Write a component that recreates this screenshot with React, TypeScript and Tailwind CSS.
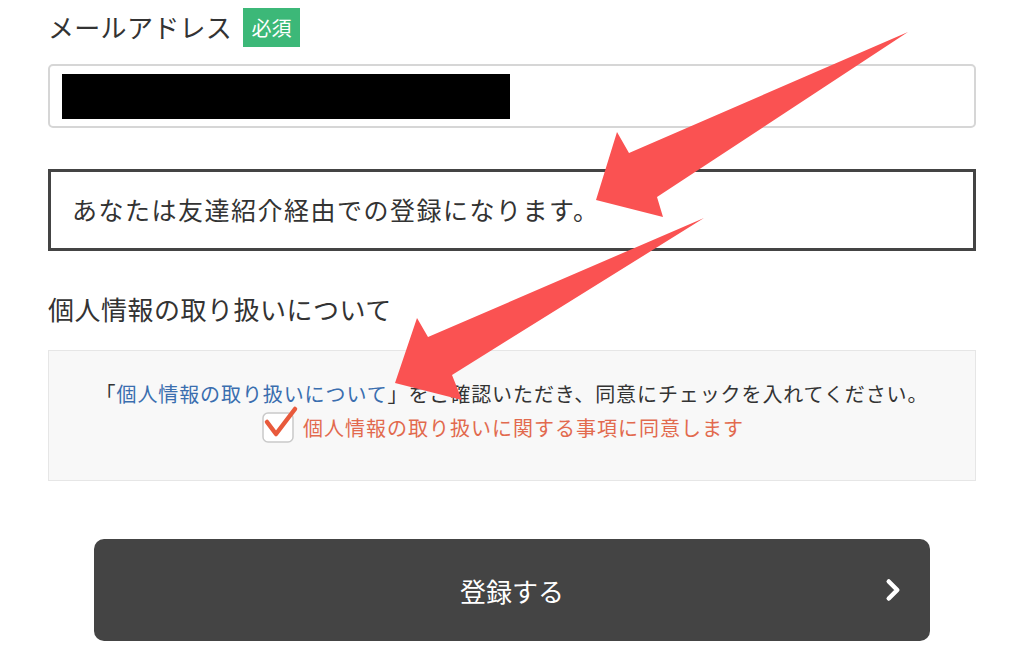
import { ChevronRight } from "lucide-react";

const jp = { fontFamily: '"Noto Sans CJK JP", "Noto Sans", sans-serif' };

const Arrows = () => (
  <svg
    className="pointer-events-none absolute left-0 top-0"
    width="1024"
    height="655"
    viewBox="0 0 1024 655"
  >
    {/* upper arrow, pointing at the referral notice */}
    <polygon
      points="908,32 657,197 663,217 596,200 617,132 629,153"
      fill="#fa5252"
    />
    {/* lower arrow, pointing at the policy link */}
    <polygon
      points="704,218 452,375 462,400 395,383 417,318 428,337"
      fill="#fa5252"
    />
  </svg>
);

const CheckBox = () => (
  <svg width="40" height="36" viewBox="0 0 40 36" className="shrink-0 -mt-[6px] overflow-visible">
    <rect x="1" y="6" width="30" height="29" rx="5" fill="#ffffff" stroke="#c9c9c9" strokeWidth="1.5" />
    <path d="M5 15 L14 27 L33 2" fill="none" stroke="#e85a3c" strokeWidth="4.5" strokeLinecap="round" strokeLinejoin="round" />
  </svg>
);

export default function App() {
  return (
    <div className="relative h-[655px] w-[1024px] overflow-hidden bg-white text-[#333333]" style={jp}>
      <div className="flex flex-col px-12 pt-[8px]">
        {/* email label */}
        <div className="flex items-center gap-[11px]">
          <span className="-mt-[3px] text-[26px] leading-[39px] tracking-[0.3px]">メールアドレス</span>
          <span className="flex h-[39px] w-[57px] items-center justify-center bg-[#3cb878] text-[20px] text-white">
            必須
          </span>
        </div>

        <div className="mt-[17px] flex h-[64px] items-center rounded-[5px] border-2 border-[#d6d6d6] pl-[12px]">
          <div className="h-[45px] w-[448px] bg-black" />
        </div>

        {/* referral notice */}
        <div className="mt-[41px] flex h-[82px] items-center border-[3px] border-[#444444] pl-[21px]">
          <span className="text-[25px] tracking-[1.5px]">あなたは友達紹介経由での登録になります。</span>
        </div>

        <h2 className="mt-[39px] text-[26px] leading-[38px] tracking-[0.5px]">個人情報の取り扱いについて</h2>

        <div className="mt-[22px] flex h-[131px] flex-col items-center border border-[#e6e6e6] bg-[#f8f8f8] pt-[28px]">
          <p className="text-[20px] leading-[30px] tracking-[0.9px]">
            「<span className="text-[#3a6eaf]">個人情報の取り扱いについて</span>」をご確認いただき、同意にチェックを入れてください。
          </p>
          <label className="mt-[4px] flex items-center gap-[1px] pr-[18px]">
            <CheckBox />
            <span className="text-[20px] leading-[30px] tracking-[1px] text-[#e26a4e]">
              個人情報の取り扱いに関する事項に同意します
            </span>
          </label>
        </div>

        <button className="relative mx-[46px] mt-[58px] flex h-[102px] items-center justify-center rounded-[10px] bg-[#444444] text-white">
          <span className="text-[26px]">登録する</span>
          <ChevronRight className="absolute right-[20px] top-1/2 -translate-y-1/2" size={34} strokeWidth={3.2} />
        </button>
      </div>

      <Arrows />
    </div>
  );
}
